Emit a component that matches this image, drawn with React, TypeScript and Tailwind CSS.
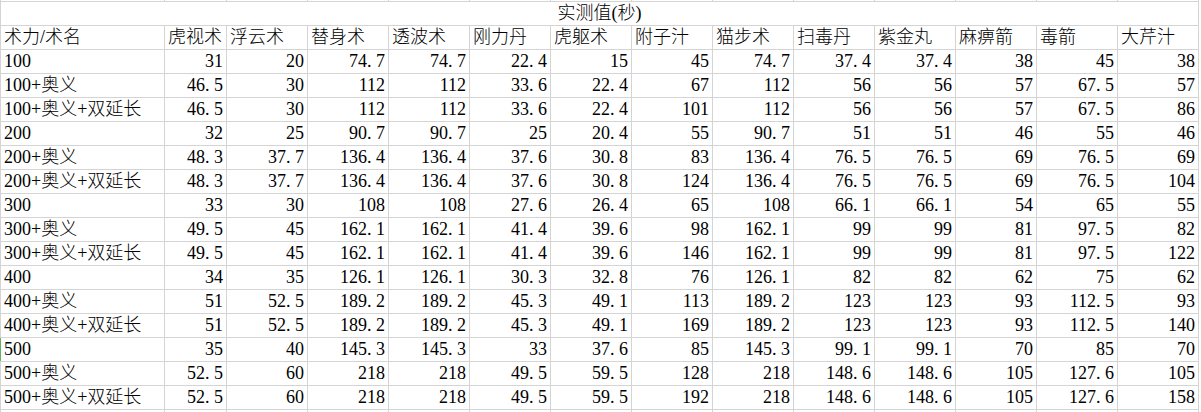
import React from "react";

const headers = [
  "虎视术",
  "浮云术",
  "替身术",
  "透波术",
  "刚力丹",
  "虎躯术",
  "附子汁",
  "猫步术",
  "扫毒丹",
  "紫金丸",
  "麻痹箭",
  "毒箭",
  "大芹汁",
];

const rows: [string, string[]][] = [
  ["100", "31 20 74.7 74.7 22.4 15 45 74.7 37.4 37.4 38 45 38"],
  ["100+奥义", "46.5 30 112 112 33.6 22.4 67 112 56 56 57 67.5 57"],
  ["100+奥义+双延长", "46.5 30 112 112 33.6 22.4 101 112 56 56 57 67.5 86"],
  ["200", "32 25 90.7 90.7 25 20.4 55 90.7 51 51 46 55 46"],
  ["200+奥义", "48.3 37.7 136.4 136.4 37.6 30.8 83 136.4 76.5 76.5 69 76.5 69"],
  ["200+奥义+双延长", "48.3 37.7 136.4 136.4 37.6 30.8 124 136.4 76.5 76.5 69 76.5 104"],
  ["300", "33 30 108 108 27.6 26.4 65 108 66.1 66.1 54 65 55"],
  ["300+奥义", "49.5 45 162.1 162.1 41.4 39.6 98 162.1 99 99 81 97.5 82"],
  ["300+奥义+双延长", "49.5 45 162.1 162.1 41.4 39.6 146 162.1 99 99 81 97.5 122"],
  ["400", "34 35 126.1 126.1 30.3 32.8 76 126.1 82 82 62 75 62"],
  ["400+奥义", "51 52.5 189.2 189.2 45.3 49.1 113 189.2 123 123 93 112.5 93"],
  ["400+奥义+双延长", "51 52.5 189.2 189.2 45.3 49.1 169 189.2 123 123 93 112.5 140"],
  ["500", "35 40 145.3 145.3 33 37.6 85 145.3 99.1 99.1 70 85 70"],
  ["500+奥义", "52.5 60 218 218 49.5 59.5 128 218 148.6 148.6 105 127.6 105"],
  ["500+奥义+双延长", "52.5 60 218 218 49.5 59.5 192 218 148.6 148.6 105 127.6 158"],
].map(([l, v]) => [l, v.split(" ")] as [string, string[]]);

function Num({ v }: { v: string }) {
  const parts = v.split(".");
  if (parts.length === 1) return <>{v}</>;
  return (
    <>
      {parts[0]}
      <span className="inline-block w-[9px] text-left">.</span>
      {parts[1]}
    </>
  );
}

const cell =
  "bg-white overflow-hidden whitespace-nowrap leading-[23px] text-black [font-family:'Liberation_Serif','Noto_Sans_CJK_SC',serif] font-light";

export default function App() {
  return (
    <div className="bg-white w-[1201px] h-[412px] overflow-hidden font-serif text-[18px]">
      <div className="grid w-fit bg-[#d4d4d4] px-px gap-px grid-cols-[163px_61px_repeat(12,80px)] grid-rows-[1px_repeat(17,23px)_2px]">
        {Array.from({ length: 14 }).map((_, i) => (
          <div key={"t" + i} className="bg-white" />
        ))}
        <div className={cell + " col-span-full text-center"}>实测值(秒)</div>
        <div className={cell + " pl-[3px]"}>术力/术名</div>
        {headers.map((h) => (
          <div key={h} className={cell + " pl-[3px]"}>
            {h}
          </div>
        ))}
        {rows.map(([label, vals]) => (
          <React.Fragment key={label}>
            <div
              className={
                cell +
                " pl-[3px]" +
                (label === "500" ? " shadow-[-1px_0_0_#5fb35f]" : "")
              }
            >
              {label}
            </div>
            {vals.map((v, i) => (
              <div key={i} className={cell + " text-right pr-[3px]"}>
                <Num v={v} />
              </div>
            ))}
          </React.Fragment>
        ))}
        {Array.from({ length: 14 }).map((_, i) => (
          <div key={"b" + i} className="bg-white" />
        ))}
      </div>
    </div>
  );
}
